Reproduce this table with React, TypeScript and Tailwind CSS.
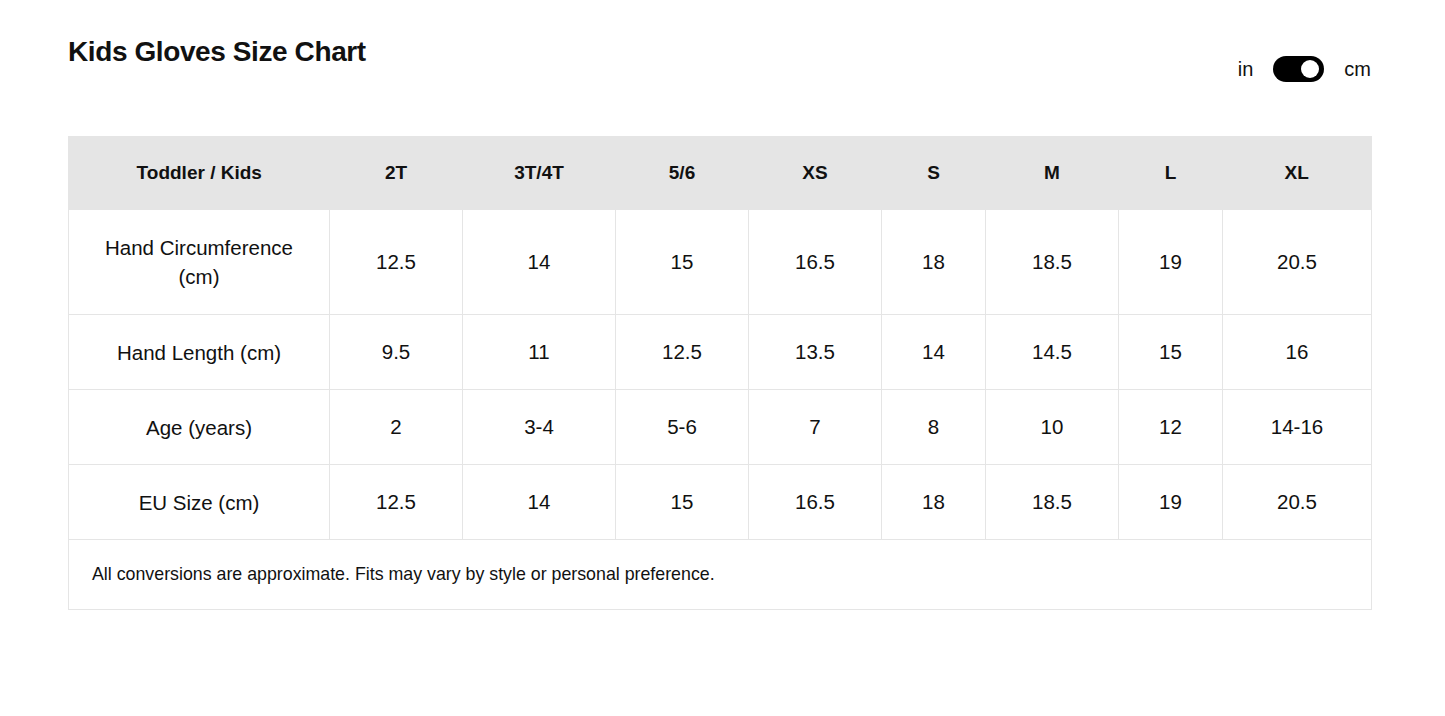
import React from 'react';

const sizes = ['2T', '3T/4T', '5/6', 'XS', 'S', 'M', 'L', 'XL'];
const colWidths = ['w-[261px]', 'w-[133px]', 'w-[153px]', 'w-[133px]', 'w-[133px]', 'w-[104px]', 'w-[133px]', 'w-[104px]', 'w-[149px]'];

const rows: { label: React.ReactNode; values: string[]; tall?: boolean }[] = [
  {
    label: (
      <>
        Hand Circumference
        <br />
        (cm)
      </>
    ),
    values: ['12.5', '14', '15', '16.5', '18', '18.5', '19', '20.5'],
    tall: true,
  },
  { label: 'Hand Length (cm)', values: ['9.5', '11', '12.5', '13.5', '14', '14.5', '15', '16'] },
  { label: 'Age (years)', values: ['2', '3-4', '5-6', '7', '8', '10', '12', '14-16'] },
  { label: 'EU Size (cm)', values: ['12.5', '14', '15', '16.5', '18', '18.5', '19', '20.5'] },
];

function UnitToggle() {
  return (
    <div className="flex items-center gap-[20px] text-[20px] text-[#111]">
      <span>in</span>
      <button className="relative h-[26px] w-[51px] rounded-full bg-black">
        <span className="absolute right-[5px] top-[4px] h-[18px] w-[18px] rounded-full bg-white" />
      </button>
      <span>cm</span>
    </div>
  );
}

export default function App() {
  return (
    <div className="min-h-[716px] bg-white px-[68px] pt-[35px] font-['Liberation_Sans',Arial,sans-serif] text-[#111]">
      <div className="flex w-[1303px] items-start justify-between">
        <h1 className="text-[28px] font-bold leading-[34px] tracking-[-0.4px]">Kids Gloves Size Chart</h1>
        <div className="mt-[19px]">
          <UnitToggle />
        </div>
      </div>

      <table className="mt-[52px] w-[1303px] table-fixed border-collapse border border-[#e5e5e5] text-[20.5px]">
        <colgroup>
          {colWidths.map((w, i) => (
            <col key={i} className={w} />
          ))}
        </colgroup>
        <thead>
          <tr className="h-[73px] bg-[#e5e5e5]">
            <th className="text-[19px] font-bold">Toddler / Kids</th>
            {sizes.map((s) => (
              <th key={s} className="text-[19px] font-bold">
                {s}
              </th>
            ))}
          </tr>
        </thead>
        <tbody>
          {rows.map((r, i) => (
            <tr key={i} className={r.tall ? 'h-[105px]' : 'h-[75px]'}>
              <td className="border border-[#e5e5e5] text-center leading-[29px]">{r.label}</td>
              {r.values.map((v, j) => (
                <td key={j} className="border border-[#e5e5e5] text-center">
                  {v}
                </td>
              ))}
            </tr>
          ))}
          <tr className="h-[70px]">
            <td colSpan={9} className="border border-[#e5e5e5] px-[23px] text-[17.8px]">
              All conversions are approximate. Fits may vary by style or personal preference.
            </td>
          </tr>
        </tbody>
      </table>
    </div>
  );
}
